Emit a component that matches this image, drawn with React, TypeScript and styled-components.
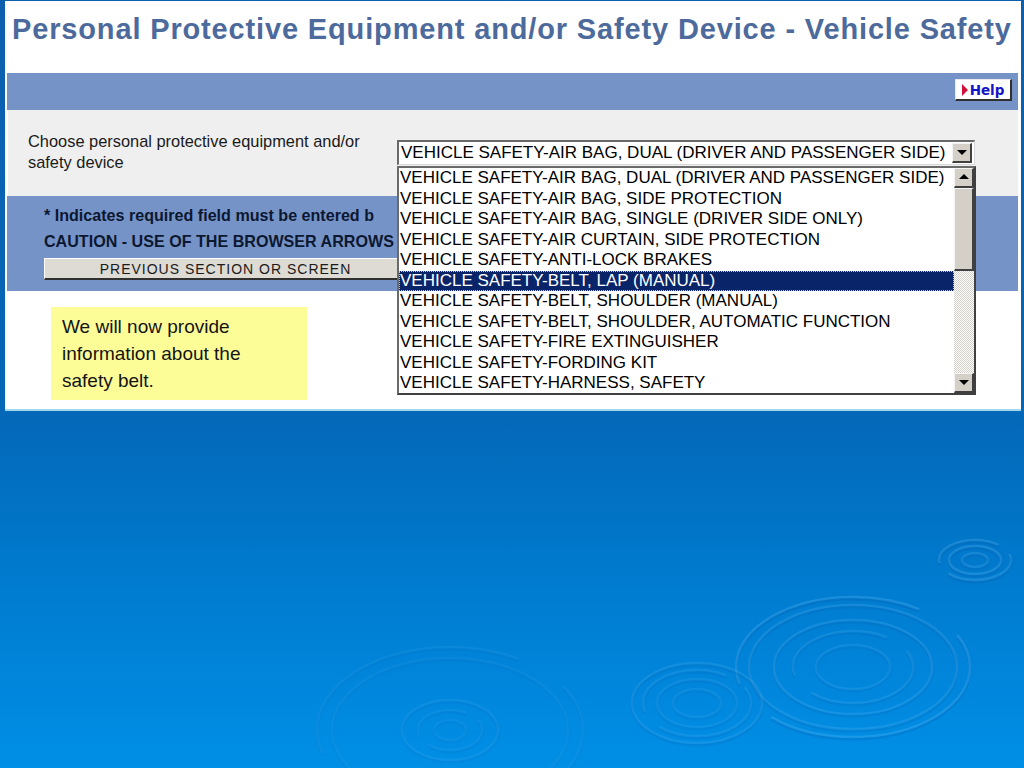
import styled, { createGlobalStyle } from "styled-components";

const GlobalStyle = createGlobalStyle`
  html, body {
    margin: 0;
    padding: 0;
  }
  body {
    width: 1024px;
    height: 768px;
    overflow: hidden;
  }
`;

const OPTIONS = [
  "VEHICLE SAFETY-AIR BAG, DUAL (DRIVER AND PASSENGER SIDE)",
  "VEHICLE SAFETY-AIR BAG, SIDE PROTECTION",
  "VEHICLE SAFETY-AIR BAG, SINGLE (DRIVER SIDE ONLY)",
  "VEHICLE SAFETY-AIR CURTAIN, SIDE PROTECTION",
  "VEHICLE SAFETY-ANTI-LOCK BRAKES",
  "VEHICLE SAFETY-BELT, LAP (MANUAL)",
  "VEHICLE SAFETY-BELT, SHOULDER (MANUAL)",
  "VEHICLE SAFETY-BELT, SHOULDER, AUTOMATIC FUNCTION",
  "VEHICLE SAFETY-FIRE EXTINGUISHER",
  "VEHICLE SAFETY-FORDING KIT",
  "VEHICLE SAFETY-HARNESS, SAFETY",
];

const SELECTED = 5;

// ripple rings on the slide background: [cx, cy, rx, ry, strength]
const RIPPLES: [number, number, number, number, number][] = [
  [975, 560, 36, 20, 0.7],
  [975, 560, 26, 14, 0.7],
  [975, 560, 13, 7, 0.6],
  [853, 667, 117, 70, 0.75],
  [853, 667, 104, 62, 0.6],
  [853, 667, 79, 47, 0.6],
  [853, 667, 60, 36, 0.5],
  [853, 667, 37, 22, 0.45],
  [697, 703, 65, 40, 0.5],
  [697, 703, 54, 33, 0.45],
  [697, 703, 40, 24, 0.4],
  [697, 703, 24, 14, 0.35],
  [450, 730, 133, 83, 0.3],
  [450, 730, 118, 72, 0.25],
  [450, 730, 48, 30, 0.35],
  [450, 730, 32, 20, 0.3],
  [450, 730, 16, 10, 0.25],
];

export default function App() {
  return (
    <>
      <GlobalStyle />
      <Slide>
        <Ripples width="1024" height="768" viewBox="0 0 1024 768">
          {RIPPLES.map(([cx, cy, rx, ry, s], i) => {
            const dash = i % 3 === 0 ? `${rx * 2} ${rx * 0.4}` : undefined;
            return (
              <g key={i}>
                <ellipse
                  cx={cx}
                  cy={cy + 2}
                  rx={rx}
                  ry={ry}
                  fill="none"
                  stroke={`rgba(0,70,150,${0.2 * s})`}
                  strokeWidth={3}
                  strokeDasharray={dash}
                />
                <ellipse
                  cx={cx}
                  cy={cy}
                  rx={rx}
                  ry={ry}
                  fill="none"
                  stroke={`rgba(110,200,255,${0.32 * s})`}
                  strokeWidth={2.5}
                  strokeDasharray={dash}
                />
              </g>
            );
          })}
        </Ripples>

        <Shot>
          <TitleBar>Personal Protective Equipment and/or Safety Device - Vehicle Safety</TitleBar>

          <Toolbar>
            <HelpButton>
              <HelpArrow />
              Help
            </HelpButton>
          </Toolbar>

          <FieldPanel>
            <FieldLabel>
              Choose personal protective equipment and/or
              <br />
              safety device
            </FieldLabel>
            <SelectBox>
              <SelectValue>{OPTIONS[0]}</SelectValue>
              <ArrowButton $down />
            </SelectBox>
          </FieldPanel>

          <NoticeBand>
            <Notice>* Indicates required field must be entered b</Notice>
            <Notice>CAUTION - USE OF THE BROWSER ARROWS</Notice>
            <NavButton>PREVIOUS SECTION OR SCREEN</NavButton>
          </NoticeBand>

          <ContentArea>
            <Callout>
              We will now provide
              <br />
              information about the
              <br />
              safety belt.
            </Callout>
          </ContentArea>

          <ListBox>
            <Rows>
              {OPTIONS.map((o, i) => (
                <Row key={o} $selected={i === SELECTED}>
                  {o}
                </Row>
              ))}
            </Rows>
            <ScrollBar>
              <ArrowButton />
              <Thumb />
              <Track />
              <ArrowButton $down />
            </ScrollBar>
          </ListBox>
        </Shot>
      </Slide>
    </>
  );
}

const Slide = styled.div`
  position: relative;
  width: 1024px;
  height: 768px;
  overflow: hidden;
  background: linear-gradient(180deg, #0d5fae 0%, #0566b6 52%, #0078cb 72%, #008fe6 100%);
`;

const Ripples = styled.svg`
  position: absolute;
  left: 0;
  top: 0;
`;

const Shot = styled.div`
  position: relative;
  margin: 1px 0 0 5px;
  width: 1011px;
  height: 408px;
  padding: 0 3px 0 2px;
  background: #ffffff;
  border-bottom: 2px solid #9fd6f0;
`;

const TitleBar = styled.div`
  height: 72px;
  box-sizing: border-box;
  padding: 14px 0 0 5px;
  font-family: "Liberation Sans", Arial, sans-serif;
  font-weight: bold;
  font-size: 29px;
  line-height: 28px;
  letter-spacing: 0.85px;
  color: #4d6a9c;
  white-space: nowrap;
`;

const Toolbar = styled.div`
  height: 37px;
  box-sizing: border-box;
  display: flex;
  justify-content: flex-end;
  align-items: flex-start;
  padding: 6px 6px 0 0;
  background: #7693c8;
`;

const HelpButton = styled.div`
  width: 57px;
  height: 22px;
  box-sizing: border-box;
  display: flex;
  align-items: center;
  justify-content: center;
  gap: 2px;
  background: #ffffff;
  border-top: 1px solid #e8e8e8;
  border-left: 1px solid #e8e8e8;
  border-right: 2px solid #303030;
  border-bottom: 2px solid #303030;
  font-family: "DejaVu Sans", Verdana, sans-serif;
  font-weight: bold;
  font-size: 13.5px;
  color: #1414c8;
`;

const HelpArrow = styled.span`
  width: 0;
  height: 0;
  border-top: 6px solid transparent;
  border-bottom: 6px solid transparent;
  border-left: 6px solid #d0103a;
`;

const FieldPanel = styled.div`
  height: 86px;
  box-sizing: border-box;
  margin-left: 1px;
  display: grid;
  grid-template-columns: 369px 578px;
  padding-left: 20px;
  background: #efefef;
`;

const FieldLabel = styled.div`
  padding-top: 21px;
  font-family: "Liberation Sans", Arial, sans-serif;
  font-size: 16.4px;
  line-height: 21px;
  color: #1a1a1a;
`;

const SelectBox = styled.div`
  margin-top: 30px;
  height: 25px;
  box-sizing: border-box;
  display: flex;
  align-items: center;
  justify-content: space-between;
  padding: 0 2px;
  background: #ffffff;
  border-top: 2px solid #6a6a6a;
  border-left: 2px solid #6a6a6a;
  border-right: 1px solid #d8d8d8;
  border-bottom: 1px solid #d8d8d8;
`;

const SelectValue = styled.span`
  font-family: "Liberation Sans", Arial, sans-serif;
  font-size: 17px;
  color: #000000;
  white-space: nowrap;
`;

const ArrowButton = styled.div<{ $down?: boolean }>`
  position: relative;
  width: 20px;
  height: 20px;
  box-sizing: border-box;
  flex: none;
  background: #d4d0c8;
  border-top: 1px solid #f4f4f4;
  border-left: 1px solid #f4f4f4;
  border-right: 2px solid #404040;
  border-bottom: 2px solid #404040;
  &::after {
    content: "";
    position: absolute;
    left: 4px;
    top: ${(p) => (p.$down ? "6px" : "5px")};
    border-left: 5px solid transparent;
    border-right: 5px solid transparent;
    ${(p) => (p.$down ? "border-top: 5px solid #000;" : "border-bottom: 5px solid #000;")}
  }
`;

const NoticeBand = styled.div`
  height: 95px;
  box-sizing: border-box;
  padding: 6px 0 0 37px;
  background: #7693c8;
`;

const Notice = styled.div`
  width: 355px;
  font-family: "Liberation Sans", Arial, sans-serif;
  font-weight: bold;
  font-size: 16.1px;
  line-height: 26px;
  color: #0c1830;
  white-space: nowrap;
`;

const NavButton = styled.div`
  margin-top: 4px;
  width: 353px;
  height: 22px;
  box-sizing: border-box;
  display: flex;
  align-items: center;
  justify-content: center;
  padding-left: 9px;
  background: #dedbd4;
  border-top: 1px solid #ffffff;
  border-left: 1px solid #ffffff;
  border-bottom: 2px solid #303030;
  font-family: "Liberation Sans", Arial, sans-serif;
  font-size: 14px;
  letter-spacing: 1px;
  color: #1a1a1a;
`;

const ContentArea = styled.div`
  padding: 16px 0 0 44px;
`;

const Callout = styled.div`
  width: 256px;
  height: 93px;
  box-sizing: border-box;
  padding: 6px 0 0 11px;
  background: #fdfd98;
  font-family: "Liberation Sans", Arial, sans-serif;
  font-size: 19px;
  line-height: 27px;
  color: #141414;
`;

const ListBox = styled.div`
  position: absolute;
  left: 392px;
  top: 165px;
  width: 579px;
  height: 229px;
  box-sizing: border-box;
  display: flex;
  background: #ffffff;
  border-top: 2px solid #6a6a6a;
  border-left: 2px solid #6a6a6a;
  border-right: 2px solid #404040;
  border-bottom: 2px solid #404040;
`;

const Rows = styled.div`
  flex: 1;
  display: flex;
  flex-direction: column;
  overflow: hidden;
`;

const Row = styled.div<{ $selected?: boolean }>`
  height: 20.5px;
  flex: none;
  box-sizing: border-box;
  padding-left: 1px;
  font-family: "Liberation Sans", Arial, sans-serif;
  font-size: 17px;
  line-height: 20px;
  white-space: nowrap;
  color: ${(p) => (p.$selected ? "#ffffff" : "#000000")};
  background: ${(p) => (p.$selected ? "#0a246a" : "transparent")};
  outline: ${(p) => (p.$selected ? "1px dotted #c8c8c8" : "none")};
  outline-offset: -1px;
`;

const ScrollBar = styled.div`
  width: 20px;
  display: flex;
  flex-direction: column;
`;

const Thumb = styled.div`
  height: 83px;
  box-sizing: border-box;
  background: #d4d0c8;
  border-top: 1px solid #f4f4f4;
  border-left: 1px solid #f4f4f4;
  border-right: 2px solid #404040;
  border-bottom: 2px solid #404040;
`;

const Track = styled.div`
  flex: 1;
  background-color: #ffffff;
  background-image: repeating-conic-gradient(#d4d0c8 0% 25%, #ffffff 0% 50%);
  background-size: 2px 2px;
`;
